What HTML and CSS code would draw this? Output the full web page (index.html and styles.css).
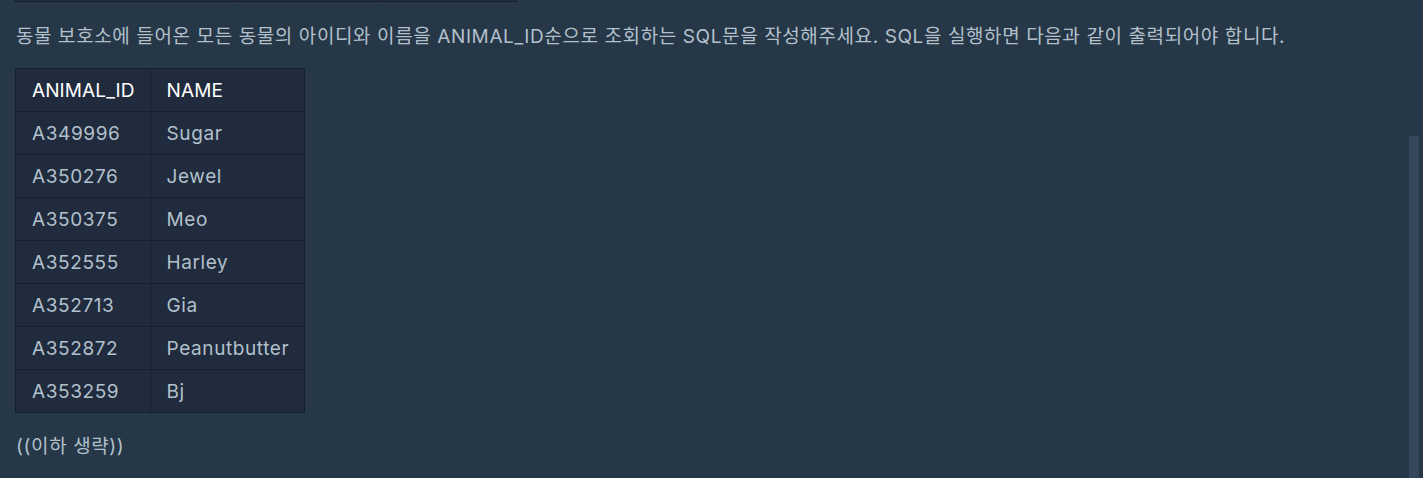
FILE: index.html
```html
<!DOCTYPE html>
<html lang="ko">
<head>
  <meta charset="UTF-8">
  <meta name="viewport" content="width=device-width, initial-scale=1.0">
  <title>모든 레코드 조회하기</title>
  <link rel="stylesheet" href="styles.css">
</head>
<body>
  <div class="prev-table">
    <span class="c1"></span><span class="c2"></span><span class="c3"></span>
  </div>

  <div class="markdown">
    <p>동물 보호소에 들어온 모든 동물의 아이디와 이름을 ANIMAL_ID순으로 조회하는 SQL문을 작성해주세요. SQL을 실행하면 다음과 같이 출력되어야 합니다.</p>

    <table>
      <thead>
        <tr><th>ANIMAL_ID</th><th>NAME</th></tr>
      </thead>
      <tbody>
        <tr><td>A349996</td><td>Sugar</td></tr>
        <tr><td>A350276</td><td>Jewel</td></tr>
        <tr><td>A350375</td><td>Meo</td></tr>
        <tr><td>A352555</td><td>Harley</td></tr>
        <tr><td>A352713</td><td>Gia</td></tr>
        <tr><td>A352872</td><td>Peanutbutter</td></tr>
        <tr><td>A353259</td><td>Bj</td></tr>
      </tbody>
    </table>

    <p>((이하 생략))</p>
  </div>

  <div class="scrollbar"></div>
</body>
</html>
```

FILE: styles.css
```css
body {
  margin: 0;
  padding: 0 16px;
  background: #263747;
  color: #b2c0cc;
  font-family: 'Inter', 'Noto Sans CJK KR', sans-serif;
  font-size: 19px;
  letter-spacing: 0.6px;
  overflow: hidden;
  height: 478px;
}
.prev-table {
  display: flex;
  width: 500px;
  margin-left: -1px;
  height: 1px;
  background: #202b3d;
  border: 1px solid #172030;
  border-top: none;
}
.prev-table span {
  border-right: 1px solid #172030;
}
.prev-table .c1 { width: 216px; }
.prev-table .c2 { width: 150px; }
.prev-table .c3 { flex: 1; border-right: none; }
.markdown p {
  margin: 0;
  line-height: 30px;
}
.markdown p:first-child {
  padding-top: 20px;
}
table {
  margin: 16px 0 19px -1px;
  border-collapse: collapse;
  background: #202b3d;
}
th, td {
  border: 1px solid #172030;
  padding: 7px 15px 6px 16px;
  text-align: left;
  line-height: 29px;
  font-weight: normal;
  white-space: nowrap;
}
th {
  color: #fff;
  letter-spacing: 0.1px;
}
.scrollbar {
  position: absolute;
  left: 1409px;
  top: 136px;
  width: 10px;
  height: 342px;
  background: #37475b;
}
```
